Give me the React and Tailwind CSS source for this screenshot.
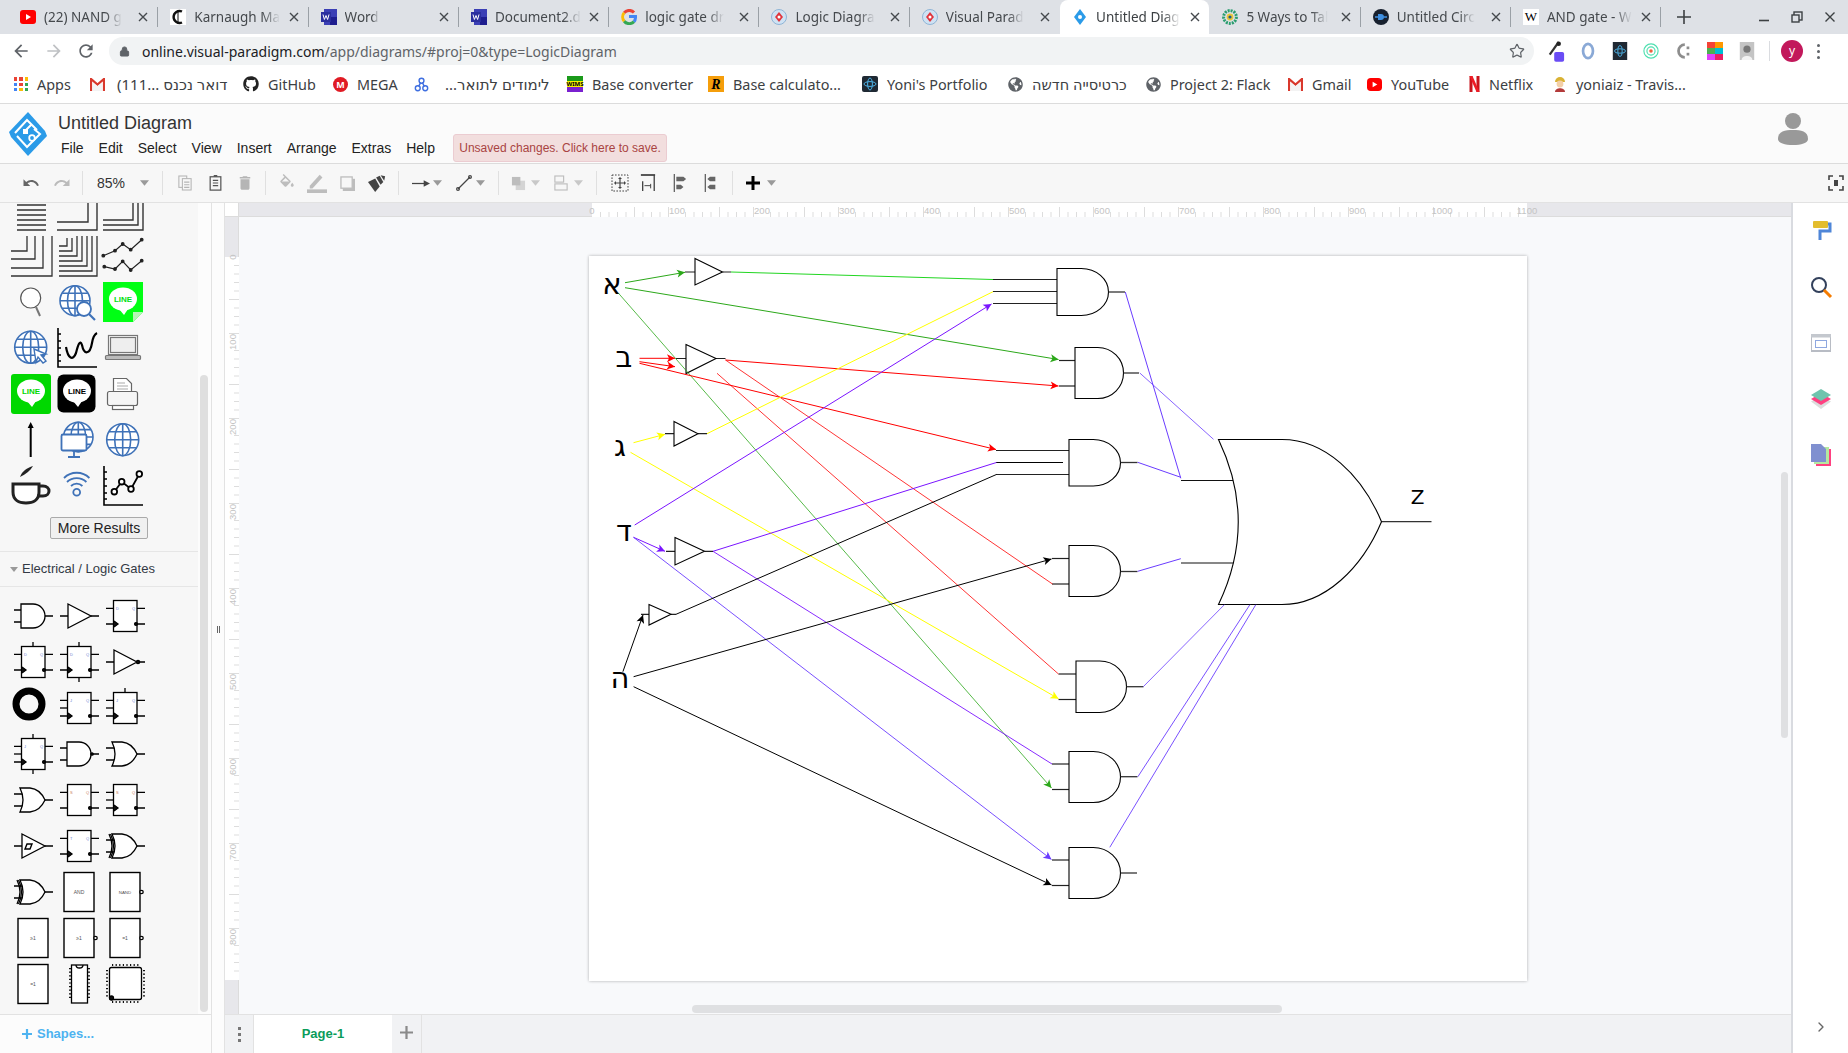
import React from 'react';
import { FaGithub, FaGlobeAmericas } from 'react-icons/fa';
import { Star, Lock, ChevronRight } from 'lucide-react';

// ---------- browser chrome ----------

const Fav = ({ kind }) => {
  if (kind === 'yt') return (
    <svg viewBox="0 0 16 16" className="w-4 h-4 shrink-0"><rect x="0" y="1" width="16" height="14" rx="3" fill="#f00" /><path d="M6 5l5 3-5 3z" fill="#fff" /></svg>
  );
  if (kind === 'kmap') return (
    <svg viewBox="0 0 16 16" className="w-4 h-4 shrink-0"><rect width="16" height="16" fill="#fff" /><path d="M12 2.5A6 6 0 1 0 12 13.5" fill="none" stroke="#111" strokeWidth="2.4" /><path d="M8 1v14" stroke="#111" strokeWidth="1" /></svg>
  );
  if (kind === 'word') return (
    <svg viewBox="0 0 16 16" className="w-4 h-4 shrink-0"><rect x="3" y="0" width="13" height="16" fill="#3b3fb5" /><rect x="9" y="8" width="7" height="8" fill="#1e1e8f" /><rect x="0" y="3" width="10" height="10" fill="#2b2f9e" /><path d="M2 5.5l1.4 5 1.6-4 1.6 4 1.4-5" fill="none" stroke="#fff" strokeWidth="1" /></svg>
  );
  if (kind === 'g') return (
    <svg viewBox="0 0 16 16" className="w-4 h-4 shrink-0" fill="none" strokeWidth="3">
      <path d="M13 3.5A6.5 6.5 0 0 0 3.2 3.8" stroke="#ea4335" />
      <path d="M3.2 3.8A6.5 6.5 0 0 0 3.2 12.2" stroke="#fbbc05" />
      <path d="M3.2 12.2A6.5 6.5 0 0 0 13 12.6" stroke="#34a853" />
      <path d="M13 12.6C14.4 11.2 14.6 9.6 14.5 7.5H8" stroke="#4285f4" />
    </svg>
  );
  if (kind === 'vp') return (
    <svg viewBox="0 0 16 16" className="w-4 h-4 shrink-0"><circle cx="8" cy="8" r="7.5" fill="#cfe2f3" stroke="#8fb4d6" /><path d="M8 3l4 5-4 5-4-5z" fill="#e0343c" /><circle cx="8" cy="8" r="1.5" fill="#fff" /></svg>
  );
  if (kind === 'vpblue') return (
    <svg viewBox="0 0 16 16" className="w-4 h-4 shrink-0"><path d="M8 0l6 8-6 8-6-8z" fill="#2b9be8" /><circle cx="8" cy="8" r="2" fill="#fff" /></svg>
  );
  if (kind === 'gear') return (
    <svg viewBox="0 0 16 16" className="w-4 h-4 shrink-0"><circle cx="8" cy="8" r="6.4" fill="none" stroke="#2a9d6f" strokeWidth="3" strokeDasharray="2 1" /><circle cx="8" cy="8" r="3.4" fill="#e8c53a" /><circle cx="8" cy="8" r="1.6" fill="#1b5f8a" /></svg>
  );
  if (kind === 'circ') return (
    <svg viewBox="0 0 16 16" className="w-4 h-4 shrink-0"><circle cx="8" cy="8" r="8" fill="#17202e" /><path d="M2 8h3M11 8h3" stroke="#3f8fe0" strokeWidth="1.4" /><path d="M5 5h3a3 3 0 0 1 0 6H5z" fill="#3f8fe0" /></svg>
  );
  return (
    <div className="w-4 h-4 shrink-0 bg-white flex items-center justify-center font-['Liberation_Serif',serif] text-[13px] text-black">W</div>
  );
};

const tabs = [
  { fav: 'yt', title: '(22) NAND g' },
  { fav: 'kmap', title: 'Karnaugh Ma' },
  { fav: 'word', title: 'Word' },
  { fav: 'word', title: 'Document2.d' },
  { fav: 'g', title: 'logic gate dr' },
  { fav: 'vp', title: 'Logic Diagra' },
  { fav: 'vp', title: 'Visual Parad' },
  { fav: 'vpblue', title: 'Untitled Diag', active: true },
  { fav: 'gear', title: '5 Ways to Tal' },
  { fav: 'circ', title: 'Untitled Circ' },
  { fav: 'wiki', title: 'AND gate - W' },
];

const TabClose = () => (
  <svg viewBox="0 0 10 10" className="w-[10px] h-[10px] shrink-0 ml-auto mr-[9px]"><path d="M1 1l8 8M9 1l-8 8" stroke="#45494d" strokeWidth="1.4" /></svg>
);

const TabStrip = () => (
  <div className="flex h-[34px] items-center bg-[#dee1e6] pl-[8px] text-[13.5px] text-[#45494d]">
    {tabs.map((t, i) => (
      <React.Fragment key={i}>
        <div className={t.active
          ? 'flex h-[34px] w-[149.3px] items-center rounded-t-lg bg-white pl-[12px] text-[#3c4043]'
          : 'flex h-[34px] w-[149.3px] items-center pl-[12px]'}>
          <Fav kind={t.fav} />
          <span className="ml-[8px] whitespace-nowrap [mask-image:linear-gradient(to_right,black_80%,transparent)]">{t.title}</span>
          <TabClose />
        </div>
        {!t.active && !(tabs[i + 1] && tabs[i + 1].active)
          ? <div className="h-[20px] w-px bg-[#9aa0a6]" />
          : <div className="h-[20px] w-px" />}
      </React.Fragment>
    ))}
    <svg viewBox="0 0 14 14" className="ml-[16px] w-[14px] h-[14px]"><path d="M7 0v14M0 7h14" stroke="#3c4043" strokeWidth="1.6" /></svg>
    <div className="ml-auto flex items-center">
      <svg viewBox="0 0 10 10" className="w-[10px] h-[10px]"><path d="M0 8.5h10" stroke="#3c4043" strokeWidth="1.6" /></svg>
      <svg viewBox="0 0 12 12" className="ml-[22px] w-[12px] h-[12px]" fill="none" stroke="#3c4043" strokeWidth="1.4"><rect x="3" y="1" width="8" height="8" /><rect x="1" y="4" width="7" height="7" fill="#dee1e6" /></svg>
      <svg viewBox="0 0 10 10" className="ml-[22px] mr-[13px] w-[10px] h-[10px]"><path d="M0.5 0.5l9 9M9.5 0.5l-9 9" stroke="#3c4043" strokeWidth="1.4" /></svg>
    </div>
  </div>
);

const NavIcon = ({ d, color, className }) => (
  <svg viewBox="0 0 24 24" className={className} fill={color}><path d={d} /></svg>
);

const AddressBar = () => (
  <div className="flex h-[34px] items-center bg-white">
    <NavIcon className="ml-[11px] w-5 h-5" color="#5f6368" d="M20 11H7.83l5.59-5.59L12 4l-8 8 8 8 1.41-1.41L7.83 13H20v-2z" />
    <NavIcon className="ml-[13px] w-5 h-5" color="#bfc1c4" d="M12 4l-1.41 1.41L16.17 11H4v2h12.17l-5.58 5.59L12 20l8-8z" />
    <NavIcon className="ml-[12px] w-5 h-5" color="#5f6368" d="M17.65 6.35C16.2 4.9 14.21 4 12 4c-4.42 0-7.99 3.58-7.99 8s3.57 8 7.99 8c3.73 0 6.84-2.55 7.73-6h-2.08c-.82 2.33-3.04 4-5.65 4-3.31 0-6-2.69-6-6s2.69-6 6-6c1.66 0 3.14.69 4.22 1.78L13 11h7V4l-2.35 2.35z" />
    <div className="ml-[13px] flex h-[28px] w-[1425px] items-center rounded-full bg-[#f1f3f4] pl-[10px] text-[14px]">
      <Lock className="w-[11px] h-[11px] text-[#5f6368]" fill="#5f6368" />
      <span className="ml-[12px] text-[#202124]">online.visual-paradigm.com</span>
      <span className="text-[#5f6368]">/app/diagrams/#proj=0&amp;type=LogicDiagram</span>
      <Star className="ml-auto mr-[9px] w-[16px] h-[16px] text-[#5f6368]" strokeWidth={1.8} />
    </div>
    <div className="ml-[13px] flex items-center">
      <svg viewBox="0 0 20 24" className="w-[18px] h-[22px]"><path d="M13 2L3 16" stroke="#333" strokeWidth="2.4" /><circle cx="13" cy="4" r="2.5" fill="#222" /><rect x="8" y="13" width="11" height="11" rx="2" fill="#6a4cf5" /></svg>
      <svg viewBox="0 0 16 20" className="ml-[15px] w-[16px] h-[18px]"><ellipse cx="8" cy="10" rx="5.5" ry="8" fill="none" stroke="#8aa9d6" strokeWidth="3" /></svg>
      <svg viewBox="0 0 16 20" className="ml-[16px] w-[16px] h-[18px]"><rect width="16" height="20" fill="#1f2933" /><ellipse cx="8" cy="10" rx="6" ry="2.4" fill="none" stroke="#4db3e8" /><ellipse cx="8" cy="10" rx="2.4" ry="6" fill="none" stroke="#4db3e8" /></svg>
      <svg viewBox="0 0 18 20" className="ml-[15px] w-[16px] h-[18px]" fill="none" stroke="#4fe0b0" strokeWidth="1.3"><circle cx="9" cy="10" r="8" /><circle cx="9" cy="10" r="4.6" /><circle cx="9" cy="10" r="2" fill="#f06040" stroke="none" /></svg>
      <svg viewBox="0 0 16 20" className="ml-[16px] w-[16px] h-[18px]"><path d="M10 3A7 7 0 1 0 10 17" fill="none" stroke="#8d8d8d" strokeWidth="3" /><rect x="12" y="5" width="3" height="3" fill="#8d8d8d" /><rect x="12" y="12" width="3" height="3" fill="#8d8d8d" /></svg>
      <div className="ml-[16px] grid h-[18px] w-[16px] grid-cols-2">
        <div className="bg-[#f44336]" /><div className="bg-[#ff9800]" />
        <div className="bg-[#4caf50]" /><div className="bg-[#00bcd4]" />
        <div className="bg-[#e040fb]" /><div className="bg-[#e91e63]" />
      </div>
      <svg viewBox="0 0 16 20" className="ml-[16px] w-[16px] h-[18px]"><rect width="16" height="20" fill="#c4c4c4" /><circle cx="8" cy="8" r="4" fill="#777" /><path d="M2 20c0-6 12-6 12 0z" fill="#f2f2f2" /></svg>
      <div className="ml-[14px] h-[20px] w-px bg-[#dadce0]" />
      <div className="ml-[11px] flex h-[22px] w-[22px] items-center justify-center rounded-full bg-[#c2185b] text-[12px] text-white">y</div>
      <div className="ml-[14px] flex flex-col gap-[3px]">
        <div className="h-[3px] w-[3px] rounded-full bg-[#5f6368]" />
        <div className="h-[3px] w-[3px] rounded-full bg-[#5f6368]" />
        <div className="h-[3px] w-[3px] rounded-full bg-[#5f6368]" />
      </div>
    </div>
  </div>
);

const GmailM = () => (
  <svg viewBox="0 0 16 14" className="w-[15px] h-[13px] shrink-0"><path d="M1 14V1l7 6 7-6v13" fill="none" stroke="#d9382c" strokeWidth="2.4" /><path d="M3 14V5l5 4 5-4v9z" fill="#f3f3f3" /></svg>
);
const YtMark = () => (
  <svg viewBox="0 0 16 16" className="w-[15px] h-[15px] shrink-0"><rect y="1" width="16" height="14" rx="4" fill="#f00" /><path d="M6 5l5 3-5 3z" fill="#fff" /></svg>
);
const GrayGlobe = () => <FaGlobeAmericas className="w-[15px] h-[15px] shrink-0 text-[#5f6368]" />;

const bookmarks = [
  { w: 'w-[76px]', text: 'Apps', icon: (
    <div className="grid h-[14px] w-[14px] shrink-0 grid-cols-3 gap-[2px]">
      <div className="bg-[#ea4335]" /><div className="bg-[#ea4335]" /><div className="bg-[#fbbc05]" />
      <div className="bg-[#4285f4]" /><div className="bg-[#ea4335]" /><div className="bg-[#34a853]" />
      <div className="bg-[#4285f4]" /><div className="bg-[#fbbc05]" /><div className="bg-[#34a853]" />
    </div>) },
  { w: 'w-[153px]', text: '(111... דואר נכנס', gap: 'ml-[3px] text-[15px]', icon: <GmailM /> },
  { w: 'w-[90px]', text: 'GitHub', icon: <FaGithub className="w-4 h-4 shrink-0 text-[#222]" /> },
  { w: 'w-[81px]', text: 'MEGA', icon: (
    <div className="flex h-[15px] w-[15px] shrink-0 items-center justify-center rounded-full bg-[#e01b24] text-[9px] font-bold text-white">M</div>) },
  { w: 'w-[153px]', text: 'לימודים לתואר...', rtl: true, gap: 'ml-[7px] text-[15px]', icon: (
    <svg viewBox="0 0 16 16" className="w-[15px] h-[15px] shrink-0" fill="none" stroke="#3f6fe0" strokeWidth="1.5"><circle cx="8" cy="4" r="2.6" /><circle cx="4" cy="12" r="2.6" /><circle cx="12" cy="12" r="2.6" /><path d="M7 6l-2 4M9 6l2 4" /></svg>) },
  { w: 'w-[141px]', text: 'Base converter', icon: (
    <div className="flex h-[16px] w-[16px] shrink-0 items-center justify-center bg-[linear-gradient(#1a9a1a_30%,#f4f000_30%,#f4f000_70%,#7a20d0_70%)] text-[6px] font-bold text-black">WIMS</div>) },
  { w: 'w-[154px]', text: 'Base calculato...', icon: (
    <div className="flex h-[16px] w-[16px] shrink-0 items-center justify-center bg-[#f59e0b] font-['Liberation_Serif',serif] text-[14px] font-bold italic text-black">R</div>) },
  { w: 'w-[146px]', text: "Yoni's Portfolio", icon: (
    <svg viewBox="0 0 16 16" className="w-4 h-4 shrink-0"><rect width="16" height="16" rx="2" fill="#1f2933" /><ellipse cx="8" cy="8" rx="6" ry="2.4" fill="none" stroke="#4db3e8" /><ellipse cx="8" cy="8" rx="2.4" ry="6" fill="none" stroke="#4db3e8" /></svg>) },
  { w: 'w-[138px]', text: 'כרטיסייה חדשה', rtl: true, gap: 'text-[14.5px]', icon: <GrayGlobe /> },
  { w: 'w-[142px]', text: 'Project 2: Flack', icon: <GrayGlobe /> },
  { w: 'w-[79px]', text: 'Gmail', icon: <GmailM /> },
  { w: 'w-[102px]', text: 'YouTube', icon: <YtMark /> },
  { w: 'w-[84px]', text: 'Netflix', icon: (
    <svg viewBox="0 0 10 16" className="w-[11px] h-[16px] shrink-0"><path d="M0 0h3v16H0zM7 0h3v16H7z" fill="#c8141c" /><path d="M0 0h3l7 16H7z" fill="#ee1c25" /></svg>) },
  { w: 'w-[150px]', text: 'yoniaiz - Travis...', icon: (
    <svg viewBox="0 0 14 16" className="w-[14px] h-[16px] shrink-0"><path d="M2 6a5 5 0 0 1 10 0z" fill="#d9b233" /><circle cx="7" cy="8" r="3.4" fill="#f3cfa8" /><path d="M2 16c0-5 10-5 10 0z" fill="#b33a3a" /></svg>) },
];

const Bookmarks = () => (
  <div className="flex h-[35px] items-center bg-white pb-[2px] pl-[14px] text-[14.4px] text-[#3c4043]">
    {bookmarks.map((b, i) => (
      <div key={i} className={`flex items-center gap-[9px] ${b.w}`}>
        {b.icon}
        <span dir={b.rtl ? 'rtl' : 'ltr'} className={`whitespace-nowrap ${b.gap || ''}`}>{b.text}</span>
      </div>
    ))}
  </div>
);

// ---------- app header and toolbar ----------

const Logo = () => (
  <svg viewBox="0 0 38 44" className="w-[38px] h-[44px]">
    <path d="M19 0L36 19 38 24 19 44 2 25 0 20z" fill="#2b9be8" />
    <path d="M6 21L18 8 28 18 M22 13L17 18" fill="none" stroke="#fff" strokeWidth="2" />
    <path d="M14 17h5v5h-5z" fill="#fff" />
    <path d="M8 24L18 35 31 22 25 17" fill="none" stroke="#fff" strokeWidth="2" />
    <circle cx="23" cy="26" r="2.8" fill="#2b9be8" stroke="#fff" strokeWidth="1.8" />
  </svg>
);

const menu = ['File', 'Edit', 'Select', 'View', 'Insert', 'Arrange', 'Extras', 'Help'];

const AppHeader = () => (
  <div className="flex h-[61px] border-y border-[#dcdcdc] bg-[#fbfbfb] font-['Liberation_Sans',sans-serif]">
    <div className="ml-[9px] self-center"><Logo /></div>
    <div className="ml-[11px] flex flex-col pt-[8px]">
      <div className="text-[18px] leading-[22px] text-[#333]">Untitled Diagram</div>
      <div className="flex h-[28px] items-center text-[14px] text-[#222]">
        {menu.map((m) => <span key={m} className="ml-[3px] mr-[12px] leading-none">{m}</span>)}
        <div className="ml-[6px] flex h-[28px] w-[214px] items-center justify-center rounded-[3px] border border-[#ebccd1] bg-[#f2dede] text-[12px] text-[#a94442]">Unsaved changes. Click here to save.</div>
      </div>
    </div>
    <svg viewBox="0 0 30 32" className="ml-auto mr-[40px] mt-[9px] w-[30px] h-[32px]" fill="#999">
      <circle cx="15" cy="8" r="8" />
      <path d="M0 26c0-8 7-9 15-9s15 1 15 9c0 4-7 6-15 6S0 30 0 26z" />
    </svg>
  </div>
);

const Tb = ({ className, children }) => (
  <div className={`flex h-[30px] items-center justify-center ${className}`}>{children}</div>
);
const TbSep = ({ className }) => <div className={`h-[24px] w-px bg-[#e0e0e0] ${className}`} />;
const Caret = ({ className }) => (
  <svg viewBox="0 0 10 6" className={`w-[9px] h-[6px] ${className}`}><path d="M0 0h10L5 6z" fill="#9a9a9a" /></svg>
);
const TI = ({ d, color }) => (
  <svg viewBox="0 0 24 24" className="w-[18px] h-[18px]" fill={color}><path d={d} /></svg>
);

const Toolbar = () => (
  <div className="flex h-[39px] items-center border-b border-[#e2e2e2] bg-[#f7f7f7] pl-[16px] font-['Liberation_Sans',sans-serif]">
    <Tb className="w-[30px]"><TI color="#666" d="M12.5 8c-2.65 0-5.05.99-6.9 2.6L2 7v9h9l-3.62-3.62c1.39-1.16 3.16-1.88 5.12-1.88 3.54 0 6.55 2.31 7.6 5.5l2.37-.78C21.08 11.03 17.15 8 12.5 8z" /></Tb>
    <Tb className="ml-[1px] w-[30px]"><TI color="#bbb" d="M18.4 10.6C16.55 8.99 14.15 8 11.5 8c-4.65 0-8.58 3.03-9.96 7.22L3.9 16c1.05-3.19 4.05-5.5 7.6-5.5 1.95 0 3.73.72 5.12 1.88L13 16h9V7l-3.6 3.6z" /></Tb>
    <TbSep className="ml-[5px]" />
    <div className="ml-[14px] w-[43px] text-[14px] text-[#333]">85%</div>
    <Caret className="" />
    <TbSep className="ml-[13px]" />
    <Tb className="ml-[7px] w-[30px]">
      <svg viewBox="0 0 16 18" className="w-[14px] h-[16px]" fill="none" stroke="#b5b5b5" strokeWidth="1.2"><rect x="1" y="1" width="9" height="13" /><rect x="5" y="4" width="10" height="13" fill="#f7f7f7" /><path d="M7 8h6M7 11h6M7 14h6" /></svg>
    </Tb>
    <Tb className="w-[30px]">
      <svg viewBox="0 0 14 18" className="w-[13px] h-[16px]" fill="none" stroke="#555" strokeWidth="1.4"><rect x="1" y="2" width="12" height="15" /><path d="M4 6h6M4 9h6M4 12h6" /><path d="M5 1h4" strokeWidth="2" /></svg>
    </Tb>
    <Tb className="w-[30px]"><TI color="#b5b5b5" d="M6 19c0 1.1.9 2 2 2h8c1.1 0 2-.9 2-2V7H6v12zM19 4h-3.5l-1-1h-5l-1 1H5v2h14V4z" /></Tb>
    <TbSep className="ml-[5px]" />
    <Tb className="ml-[6px] w-[30px]"><TI color="#bdbdbd" d="M16.56 8.94L7.62 0 6.21 1.41l2.38 2.38-5.15 5.15c-.59.59-.59 1.54 0 2.12l5.5 5.5c.29.29.68.44 1.06.44s.77-.15 1.06-.44l5.5-5.5c.59-.58.59-1.53 0-2.12zM5.21 10L10 5.21 14.79 10H5.21zM19 11.5s-2 2.17-2 3.5c0 1.1.9 2 2 2s2-.9 2-2c0-1.33-2-3.5-2-3.5z" /></Tb>
    <Tb className="w-[30px]">
      <svg viewBox="0 0 22 22" className="w-[20px] h-[20px]" fill="#bdbdbd"><path d="M3 14L14 2l3 3L6 17H3z" /><rect x="0" y="18" width="22" height="4" /></svg>
    </Tb>
    <Tb className="w-[30px]">
      <svg viewBox="0 0 16 16" className="w-[15px] h-[15px]"><rect x="3" y="3" width="13" height="13" fill="#bdbdbd" /><rect x="1" y="1" width="12" height="12" fill="#f7f7f7" stroke="#bdbdbd" strokeWidth="1.4" /></svg>
    </Tb>
    <Tb className="w-[30px]">
      <svg viewBox="0 0 20 20" className="w-[18px] h-[18px]" fill="#444"><path d="M0 9l8-4 5 9-5 6z" /><path d="M9 4l4-2 4 7-3 3z" /><path d="M14 1.5l5 1-1 5z" /></svg>
    </Tb>
    <TbSep className="ml-[6px]" />
    <Tb className="ml-[10px] w-[24px]">
      <svg viewBox="0 0 20 10" className="w-[18px] h-[9px]"><path d="M0 5h14" stroke="#444" strokeWidth="1.4" /><path d="M13 1.5L20 5l-7 3.5z" fill="#444" /></svg>
    </Tb>
    <Caret className="" />
    <Tb className="ml-[10px] w-[24px]">
      <svg viewBox="0 0 16 16" className="w-[16px] h-[16px]" fill="none" stroke="#444" strokeWidth="1.2"><path d="M2 14L14 2" /><circle cx="2" cy="14" r="1.4" /><circle cx="14" cy="2" r="1.4" /></svg>
    </Tb>
    <Caret className="" />
    <TbSep className="ml-[13px]" />
    <Tb className="ml-[7px] w-[24px]">
      <svg viewBox="0 0 16 16" className="w-[15px] h-[15px]"><rect x="5" y="5" width="10" height="10" fill="#d4d4d4" /><rect x="1" y="1" width="9" height="9" fill="#bdbdbd" /></svg>
    </Tb>
    <Caret className="ml-[1px] opacity-50" />
    <Tb className="ml-[9px] w-[24px]">
      <svg viewBox="0 0 16 18" className="w-[14px] h-[16px]" fill="none" stroke="#bdbdbd" strokeWidth="1.3"><rect x="1" y="1" width="10" height="7" /><rect x="1" y="10" width="14" height="7" /></svg>
    </Tb>
    <Caret className="ml-[1px] opacity-50" />
    <TbSep className="ml-[13px]" />
    <Tb className="ml-[9px] w-[28px]">
      <svg viewBox="0 0 18 18" className="w-[18px] h-[18px]" fill="none" stroke="#444"><rect x="1" y="1" width="16" height="16" strokeDasharray="1.6 1.4" /><path d="M9 4v10M4 9h10" strokeWidth="1.2" /><path d="M9 3l-2 2h4zM9 15l-2-2h4zM3 9l2-2v4zM15 9l-2-2v4z" fill="#444" stroke="none" /></svg>
    </Tb>
    <Tb className="w-[28px]">
      <svg viewBox="0 0 18 20" className="w-[16px] h-[18px]" fill="none" stroke="#444" strokeWidth="1.5"><path d="M1 1h16" strokeWidth="2" /><path d="M16 1v18M3 8v11" /><path d="M5 13h7M12 11v5" strokeWidth="1.1" /></svg>
    </Tb>
    <Tb className="ml-[3px] w-[28px]">
      <svg viewBox="0 0 18 20" className="w-[16px] h-[18px]" fill="#666"><path d="M3 0h1.5v20H3z" /><path d="M6 3h8l3 2.5L14 8H6zM6 12h5l3 2.5L11 17H6z" /></svg>
    </Tb>
    <Tb className="ml-[3px] w-[28px]">
      <svg viewBox="0 0 18 20" className="w-[16px] h-[18px]" fill="#666"><path d="M3 0h1.5v20H3z" /><path d="M15 3H9L6 5.5 9 8h6zM15 12H9l-3 2.5L9 17h6z" /></svg>
    </Tb>
    <TbSep className="ml-[8px]" />
    <Tb className="ml-[8px] w-[24px]">
      <svg viewBox="0 0 14 14" className="w-[14px] h-[14px]"><path d="M7 0v14M0 7h14" stroke="#000" strokeWidth="3" /></svg>
    </Tb>
    <Caret className="ml-[2px]" />
    <svg viewBox="0 0 16 16" className="ml-auto mr-[4px] w-[16px] h-[16px]" fill="none" stroke="#444" strokeWidth="1.6">
      <path d="M1 5V1h4M11 1h4v4M15 11v4h-4M5 15H1v-4" />
      <rect x="6" y="5" width="4" height="6" fill="#444" stroke="none" />
    </svg>
  </div>
);

// ---------- shape sidebar ----------

const Cell = ({ children, ...rest }) => (
  <svg viewBox="0 0 46 46" className="w-[46px] h-[46px]" fill="none" {...rest}>{children}</svg>
);

const BLUE = '#3f72b8';
const Globe = ({ cx, cy, r }) => (
  <g stroke={BLUE} strokeWidth="1.6" fill="#fff">
    <circle cx={cx} cy={cy} r={r} />
    <ellipse cx={cx} cy={cy} rx={r * 0.5} ry={r} fill="none" />
    <path d={`M${cx} ${cy - r}V${cy + r}M${cx - r} ${cy}H${cx + r}M${cx - r * 0.85} ${cy - r * 0.5}H${cx + r * 0.85}M${cx - r * 0.85} ${cy + r * 0.5}H${cx + r * 0.85}`} fill="none" />
  </g>
);
const LineBubble = ({ color }) => (
  <g>
    <ellipse cx="23" cy="20" rx="14" ry="11.5" fill="#fff" />
    <path d="M19 30l5 6 4-6z" fill="#fff" />
    <text x="23" y="23" textAnchor="middle" fontSize="8" fontWeight="700" fill={color} fontFamily="Liberation Sans, sans-serif">LINE</text>
  </g>
);

const shapeIcons = [
  <Cell key="a1" stroke="#333" strokeWidth="1.4"><path d="M9 3h29M9 8h29M9 13h29M9 18h29M9 23h29M9 28h29M9 33h29M9 38h29M9 43h29" /></Cell>,
  <Cell key="a2" stroke="#333" strokeWidth="1.4"><path d="M3 35h31V3M3 43h40V3" /></Cell>,
  <Cell key="a3" stroke="#333" strokeWidth="1.4"><path d="M3 43h40V3M3 38h35V3M3 33h30V3" /></Cell>,
  <Cell key="b1" stroke="#333" strokeWidth="1.3"><path d="M3 43h41V3M3 35h32V3M3 26h24V3M3 18h16V3" /></Cell>,
  <Cell key="b2" stroke="#333" strokeWidth="1.3"><path d="M5 43h38V3M5 38h33V3M5 33h28V3M5 28h23V3M5 23h18V3M5 18h13V5M5 13h8V5" /></Cell>,
  <Cell key="b3" stroke="#222" strokeWidth="1.2">
    <path d="M3.3 22.7L15 17.7 22.7 11 30.7 16.7 41.7 6.7M4.3 33.7L15 36 22.7 28.3 30.7 37 41.7 27.7" />
    <g fill="#222">
      <circle cx="3.3" cy="22.7" r="1.3" /><circle cx="15" cy="17.7" r="1.3" /><circle cx="22.7" cy="11" r="1.3" /><circle cx="30.7" cy="16.7" r="1.3" /><circle cx="41.7" cy="6.7" r="1.3" />
      <circle cx="4.3" cy="33.7" r="1.3" /><circle cx="15" cy="36" r="1.3" /><circle cx="22.7" cy="28.3" r="1.3" /><circle cx="30.7" cy="37" r="1.3" /><circle cx="41.7" cy="27.7" r="1.3" />
    </g>
  </Cell>,
  <Cell key="c1"><circle cx="22.7" cy="19" r="10" stroke="#555" strokeWidth="1.2" fill="#fff" /><path d="M28 28l4 9" stroke="#777" strokeWidth="2" /></Cell>,
  <Cell key="c2"><Globe cx={21} cy={21.7} r={15} /><circle cx="30" cy="30" r="7" stroke={BLUE} strokeWidth="1.8" fill="#fff" /><path d="M35 35l6 6" stroke={BLUE} strokeWidth="2.2" /></Cell>,
  <Cell key="c3"><path d="M3 3h40v30L33 43H3z" fill="#00ff14" /><path d="M43 33H33v10z" fill="#b5f5b5" /><LineBubble color="#00e012" /></Cell>,
  <Cell key="d1"><Globe cx={22.7} cy={22.3} r={16} /><path d="M26 24l12 5-5 1 5 6-3 2-5-6-2 5z" fill="#fff" stroke={BLUE} strokeWidth="1.4" /></Cell>,
  <Cell key="d2">
    <path d="M4 3v39h39M4 9h3M4 16h3M4 23h3M4 30h3M4 36h3" stroke="#000" strokeWidth="1.6" />
    <path d="M12 22C14 34 19 36 22 28 24 20 26 14 28 20 30 30 36 30 38 18 39 12 41 9 43 8" stroke="#000" strokeWidth="2.2" />
  </Cell>,
  <Cell key="d3" stroke="#777" strokeWidth="1.2">
    <rect x="8.5" y="10.5" width="29" height="19" fill="#fff" />
    <rect x="10.5" y="12.5" width="25" height="15" fill="#eee" />
    <rect x="5.5" y="30.5" width="35" height="4" rx="1" fill="#bbb" />
  </Cell>,
  <Cell key="e1"><rect x="3" y="3" width="40" height="40" rx="3" fill="#00d800" /><LineBubble color="#00d800" /></Cell>,
  <Cell key="e2"><rect x="3.5" y="3.5" width="38" height="38" rx="6" fill="#000" /><LineBubble color="#000" /></Cell>,
  <Cell key="e3" stroke="#666" strokeWidth="1.2">
    <path d="M13.5 21V7.5h13l5 5V21" fill="#fff" />
    <path d="M17 12h8M17 15h11M17 18h11" stroke="#aaa" />
    <rect x="7.5" y="20.5" width="30" height="14" rx="2" fill="#f5f5f5" />
    <rect x="12.5" y="34.5" width="21" height="4" fill="#fff" />
  </Cell>,
  <Cell key="f1"><path d="M22.7 10v30" stroke="#000" strokeWidth="2" /><path d="M22.7 5l-3 6h6z" fill="#000" /></Cell>,
  <Cell key="f2">
    <Globe cx={24.3} cy={20} r={14.7} />
    <rect x="7.5" y="17.5" width="25" height="16" rx="1.5" fill="#fff" stroke={BLUE} strokeWidth="1.8" />
    <path d="M20 34v5M14 40h12" stroke={BLUE} strokeWidth="1.8" />
  </Cell>,
  <Cell key="f3"><Globe cx={22.7} cy={22.7} r={16} /></Cell>,
  <Cell key="g1">
    <path d="M12 14C14 8 19 5 25 3 22 8 18 11 12 14z" fill="#222" />
    <path d="M5 21H31V29C31 37 25 40 18 40S5 37 5 29z" fill="#fff" stroke="#222" strokeWidth="3" />
    <path d="M31 23H35C43 23 43 33 35 33H29" stroke="#222" strokeWidth="3" />
  </Cell>,
  <Cell key="g2" stroke={BLUE} strokeWidth="1.8"><circle cx="22.7" cy="29.3" r="3.4" /><path d="M17 23a8 8 0 0 1 11.4 0M13 19a14 14 0 0 1 19.4 0M10 15a18 18 0 0 1 25.4 0" /></Cell>,
  <Cell key="g3">
    <path d="M4 3v39h39M4 9h3M4 16h3M4 23h3M4 30h3M4 36h3" stroke="#000" strokeWidth="1.6" />
    <path d="M14.3 28.7L21.7 18.7 31 26 39.3 11" stroke="#000" strokeWidth="1.8" />
    <g fill="#fff" stroke="#000" strokeWidth="1.8"><circle cx="14.3" cy="28.7" r="2.8" /><circle cx="21.7" cy="18.7" r="2.8" /><circle cx="31" cy="26" r="2.8" /><circle cx="39.3" cy="11" r="2.8" /></g>
  </Cell>,
];

const G = ({ children }) => (
  <svg viewBox="0 0 46 46" className="w-[46px] h-[46px]" fill="none" stroke="#000" strokeWidth="1.3">{children}</svg>
);
const AndBody = () => <path d="M11 11H23A12 12 0 0 1 23 35H11Z" fill="#fff" />;
const AndGate = ({ dot }) => (
  <G>
    <path d="M4 17H11M4 29H11M35 23H43" />
    <AndBody />
    {dot && <circle cx="36" cy="23" r="1.2" fill="#111" />}
  </G>
);
const BufGate = ({ dot }) => (
  <G>
    <path d="M4 23H12M35 23H43" />
    <path d="M12 11L35 23 12 35Z" fill="#fff" />
    {dot && <circle cx="36" cy="23" r="1.6" fill="#111" />}
  </G>
);
const OrGate = ({ xor, bar }) => (
  <G>
    <path d="M4 17H13M4 29H13M35 23H43" />
    {xor && <path d="M7 11Q13 23 7 35" />}
    <path d="M10 11H20Q30 12 35 23 30 34 20 35H10Q16 23 10 11Z" fill="#fff" />
    {bar && <path d="M8.5 11Q14.5 23 8.5 35" />}
  </G>
);
const FF = ({ top, bottom, three, clock, l = 'D', tr = 'Q', col = '#6a7fd0' }) => (
  <G>
    <path d="M4 15.3H12M4 31H12M35 15.3H43M35 31H43" />
    {three && <path d="M4 23H12" />}
    {top && <path d="M23 3V8" />}
    {bottom && <path d="M23 38V43" />}
    <rect x="11.5" y="7.5" width="23.5" height="31" fill="#fff" />
    {clock && <path d="M12 28L16 31 12 34" fill="#111" />}
    <circle cx="34" cy="31" r="1.4" fill="#111" />
    <text x="14" y="17" fontSize="4" stroke="none" fill={col} fontFamily="Liberation Sans, sans-serif">{l}</text>
    <text x="30" y="17" fontSize="4" stroke="none" fill={col} fontFamily="Liberation Sans, sans-serif">{tr}</text>
  </G>
);
const LogicBox = ({ label, bubble, small }) => (
  <G>
    <rect x="8" y="3.5" width="30" height="39" fill="#fff" strokeWidth="1.4" />
    {bubble && <circle cx="39.5" cy="23" r="1.7" fill="#fff" />}
    <text x="23" y="24.5" textAnchor="middle" fontSize={small ? 4.4 : 5} stroke="none" fill="#555" fontFamily="Liberation Sans, sans-serif">{label}</text>
  </G>
);

const gateIcons = [
  <AndGate key="1" />, <BufGate key="2" />, <FF key="3" clock />,
  <FF key="4" top clock />, <FF key="5" top bottom clock />, <BufGate key="6" dot />,
  <G key="7"><circle cx="19" cy="19" r="13" stroke="#000" strokeWidth="7" /></G>, <FF key="8" three clock l="J" />, <FF key="9" top three clock l="J" />,
  <FF key="10" top bottom three clock l="J" />, <AndGate key="11" dot />, <OrGate key="12" />,
  <OrGate key="13" />, <FF key="14" l="S" col="#c97a5a" />, <FF key="15" three clock l="S" col="#c97a5a" />,
  <G key="16"><path d="M4 23H12M35 23H43" /><path d="M12 11L35 23 12 35Z" fill="#fff" /><path d="M15 26L17 21H22L20 26Z" strokeWidth="1.4" /></G>, <FF key="17" clock l="T" />, <OrGate key="18" xor bar />,
  <OrGate key="19" xor bar />, <LogicBox key="20" label="AND" />, <LogicBox key="21" label="NAND" bubble small />,
  <LogicBox key="22" label="≥1" />, <LogicBox key="23" label="≥1" bubble />, <LogicBox key="24" label="=1" bubble />,
  <LogicBox key="25" label="=1" />,
  <G key="26">
    <rect x="15.5" y="4" width="16" height="38" fill="#fff" strokeWidth="1.3" />
    <path d="M14 7v32M33 7v32" stroke="#111" strokeWidth="2" strokeDasharray="1.2 2.4" />
    <path d="M20 4a3.5 3 0 0 0 7 0" />
  </G>,
  <G key="27">
    <rect x="7.5" y="6.5" width="32" height="32" rx="2" fill="#fff" strokeWidth="1.3" />
    <path d="M5 9v27M42 9v27M10 4h27M10 41h27" stroke="#111" strokeWidth="2" strokeDasharray="1.2 2.4" />
    <circle cx="9.5" cy="37" r="2" fill="#111" />
  </G>,
];

const Sidebar = () => (
  <div className="flex w-[212px] shrink-0 flex-col border-r border-[#e2e2e2] bg-[#fcfcfc] font-['Liberation_Sans',sans-serif]">
    <div className="flex min-h-0 flex-1">
      <div className="w-[199px] overflow-hidden bg-[#f7f7f7]">
        <div className="-mt-[16px] grid grid-cols-[46px_46px_46px] auto-rows-[46px] pl-[8px]">{shapeIcons}</div>
        <button className="ml-[50px] mt-[8px] flex h-[22px] w-[98px] items-center justify-center rounded-[2px] border border-[#aaa] bg-[#f0f0f0] text-[14px] text-[#222]">More Results</button>
        <div className="mt-[12px] flex h-[36px] items-center border-y border-[#e6e6e6] pl-[10px] text-[13px] text-[#333a45]">
          <svg viewBox="0 0 8 5" className="w-[8px] h-[5px]"><path d="M0 0h8L4 5z" fill="#9a9a9a" /></svg>
          <span className="ml-[4px]">Electrical / Logic Gates</span>
        </div>
        <div className="mt-[6px] grid grid-cols-[46px_46px_46px] auto-rows-[46px] pl-[10px]">{gateIcons}</div>
      </div>
      <div className="flex w-[13px] flex-col pl-[2px]">
        <div className="mt-[172px] mb-[2px] w-[8px] flex-1 rounded-full bg-[#dfdfdf]" />
      </div>
    </div>
    <div className="flex h-[39px] items-center border-t border-[#e2e2e2] pl-[22px] text-[13px] font-bold text-[#4eb3f0]">
      <svg viewBox="0 0 10 10" className="w-[10px] h-[10px]"><path d="M5 0v10M0 5h10" stroke="#4eb3f0" strokeWidth="2.2" /></svg>
      <span className="ml-[5px]">Shapes...</span>
    </div>
  </div>
);

// ---------- diagram ----------

const PURPLE = '#6a3cff';
const VIOLET = '#7a14ff';
const RED = '#ff0000';
const YELLOW = '#ffff00';
const GREEN = '#2ca81a';

const Wire = ({ p, c, w = 1 }) => (
  <polyline points={p} fill="none" stroke={c} strokeWidth={w} />
);

const Arrow = ({ x1, y1, x2, y2, c, w = 1 }) => {
  const a = Math.atan2(y2 - y1, x2 - x1);
  const pt = (back, side) => {
    const bx = x2 - Math.cos(a) * back - Math.sin(a) * side;
    const by = y2 - Math.sin(a) * back + Math.cos(a) * side;
    return `${bx},${by}`;
  };
  return (
    <g>
      <line x1={x1} y1={y1} x2={x2} y2={y2} stroke={c} strokeWidth={w} />
      <polygon points={`${x2},${y2} ${pt(8, 4)} ${pt(6, 0)} ${pt(8, -4)}`} fill={c} />
    </g>
  );
};

const And = ({ x, t, b, tip, inputs, outY, outX }) => {
  const s = x + (tip - x) * 0.47;
  return (
    <g stroke="#000" fill="none" strokeWidth="1.1">
      {inputs.map((i, n) => <path key={n} d={`M${i[0]} ${i[1]}H${x}`} stroke="#222" strokeWidth="1.2" />)}
      <path d={`M${x} ${t}H${s}A${tip - s} ${(b - t) / 2} 0 0 1 ${s} ${b}H${x}Z`} fill="#fff" />
      <path d={`M${tip} ${outY}H${outX}`} stroke="#333" strokeWidth="1.3" />
    </g>
  );
};

const Buf = ({ x, t, b, tip, y, inX, outX }) => (
  <g stroke="#000" fill="none" strokeWidth="1.1">
    <path d={`M${inX} ${y}H${x}M${tip} ${y}H${outX}`} stroke="#222" strokeWidth="1.2" />
    <path d={`M${x} ${t}L${tip} ${y}L${x} ${b}Z`} fill="#fff" />
  </g>
);

const hebrew = 'DejaVu Sans, sans-serif';

const Diagram = () => (
  <svg viewBox="589 256 938 725" className="h-[725px] w-[938px]">
    <Buf x={695} t={258.5} b={285} tip={722.5} y={272} inX={685} outX={731} />
    <Buf x={686} t={344.5} b={373.5} tip={716} y={358.5} inX={676} outX={725.5} />
    <Buf x={674} t={421.5} b={446} tip={698} y={433.7} inX={665} outX={707} />
    <Buf x={675} t={537.5} b={565} tip={704.5} y={551.3} inX={666} outX={713} />
    <Buf x={649} t={604.5} b={625} tip={671} y={614.3} inX={641} outX={676} />

    <And x={1057} t={268.5} b={315.5} tip={1108.5} outY={292} outX={1125} inputs={[[993, 279.5], [993, 291.5], [993, 303.5]]} />
    <And x={1075} t={347.5} b={398.5} tip={1123.5} outY={373} outX={1139} inputs={[[1059, 360.5], [1059, 386]]} />
    <And x={1069} t={439.5} b={486} tip={1120.5} outY={462.5} outX={1137.5} inputs={[[996, 450.5], [996, 474.5]]} />
    <path d="M996 462.5H1063" stroke="#000" strokeWidth="1" />
    <And x={1069} t={545.5} b={596.5} tip={1120.5} outY={571.5} outX={1137.5} inputs={[[1052, 558.5], [1052, 584]]} />
    <And x={1076} t={661} b={712.5} tip={1126.5} outY={686.7} outX={1143.5} inputs={[[1058.5, 674], [1058.5, 699.5]]} />
    <And x={1069} t={751.5} b={802.5} tip={1120.5} outY={776.7} outX={1137.5} inputs={[[1052, 764], [1052, 789.5]]} />
    <And x={1069} t={847.5} b={898.5} tip={1120.5} outY={873} outX={1137} inputs={[[1052, 860], [1052, 885.5]]} />

    {/* big OR gate */}
    <path d="M1181 480.5H1234M1181 563H1234" stroke="#111" strokeWidth="1.1" />
    <path d="M1381.5 521.7H1431.5" stroke="#333" strokeWidth="1.3" />
    <path d="M1218.5 439.5H1282C1325 439.5 1362 475 1381.5 521.7 1362 568 1325 604.5 1282 604.5H1218.5Q1258 522 1218.5 439.5Z" fill="#fff" stroke="#000" strokeWidth="1.1" />

    {/* input wires */}
    <Arrow x1={625} y1={282.7} x2={685} y2={272.3} c={GREEN} />
    <Arrow x1={625} y1={287.7} x2={1058.5} y2={359.5} c={GREEN} />
    <Arrow x1={618} y1={292.7} x2={1051.5} y2={788} c={GREEN} w={0.8} />
    <Wire p="731,272 993,279.5" c="#22d622" />

    <Arrow x1={639.5} y1={358.3} x2={675} y2={358.3} c={RED} />
    <Arrow x1={639.5} y1={361.7} x2={675} y2={366.7} c={RED} />
    <Arrow x1={639.5} y1={363.3} x2={996} y2={449.5} c={RED} />
    <Arrow x1={725.5} y1={360} x2={1058.5} y2={386} c={RED} />
    <Wire p="725.5,360 1052.5,584" c={RED} w={0.8} />
    <Wire p="717,373.3 1058.5,674" c={RED} w={0.8} />

    <Arrow x1={633.5} y1={442.7} x2={665} y2={434.3} c={YELLOW} />
    <Wire p="707,433.7 993,291.7" c={YELLOW} />
    <Arrow x1={630.5} y1={452.3} x2={1058.5} y2={698.7} c={YELLOW} />

    <Arrow x1={634.7} y1={525} x2={991.5} y2={304} c={VIOLET} />
    <Arrow x1={633.5} y1={537.3} x2={665} y2={551.3} c={VIOLET} />
    <Arrow x1={633.5} y1={537.3} x2={1051.5} y2={859.5} c={PURPLE} w={0.9} />
    <Wire p="713,551.3 996.4,462.5" c={VIOLET} />
    <Wire p="713,551.3 1052,764" c={VIOLET} w={0.9} />

    <Wire p="676,614.3 996.4,474.5" c="#000" />
    <Arrow x1={622.9} y1={671.7} x2={643} y2={615} c="#000" />
    <Arrow x1={633.6} y1={676.7} x2={1051.5} y2={559} c="#000" />
    <Arrow x1={633.6} y1={686.7} x2={1051.5} y2={885} c="#000" />

    {/* outputs into the OR */}
    <Wire p="1125.3,292 1180.8,478.3" c={PURPLE} />
    <Wire p="1139.8,373 1213.5,439.3" c={PURPLE} w={0.8} />
    <Wire p="1137.7,462.3 1180.8,477.3" c={PURPLE} />
    <Wire p="1137.7,571.3 1180.8,558.7" c={PURPLE} />
    <Wire p="1143.3,686.7 1224.4,604.7" c={PURPLE} w={0.8} />
    <Wire p="1137.9,776.7 1249.9,604.7" c={PURPLE} w={0.9} />
    <Wire p="1109.8,847.3 1255.8,604.7" c={PURPLE} w={0.9} />

    <g fontFamily={hebrew} fontSize="29" fill="#000" textAnchor="middle">
      <text x="612" y="294">א</text>
      <text x="624" y="367">ב</text>
      <text x="620" y="456">ג</text>
      <text x="624" y="541">ד</text>
      <text x="620" y="688">ה</text>
    </g>
    <text x="1417.5" y="504" fontFamily={hebrew} fontSize="20" fill="#000" textAnchor="middle">Z</text>
  </svg>
);

// ---------- rulers ----------

const rulerTicks = Array.from({ length: 110 }, (_, i) => i);
const rulerLabels = Array.from({ length: 12 }, (_, i) => i);
const sideLabels = Array.from({ length: 9 }, (_, i) => i);
const sideTicks = Array.from({ length: 85 }, (_, i) => i);

const TopRuler = () => (
  <svg viewBox="0 0 935 14" className="h-[14px] w-[935px] overflow-visible bg-white">
    {rulerTicks.map((i) => (
      i % 10 === 0 ? null : (
        <line key={i} x1={i * 8.5} x2={i * 8.5} y1={i % 10 === 5 || i % 10 === 9 ? 4 : 9} y2={14} stroke="#d4d4d4" strokeWidth="0.8" />
      )
    ))}
    {rulerLabels.map((i) => (
      <text key={i} x={i * 85} y={11} fontSize="9.5" fill="#c4c4c4" textAnchor="middle" fontFamily="Liberation Sans, sans-serif">{i * 100}</text>
    ))}
  </svg>
);

const SideRuler = () => (
  <svg viewBox="0 0 14 723" className="mt-[40px] h-[723px] w-[14px] overflow-visible bg-white">
    {sideTicks.map((i) => (
      i % 10 === 0 ? null : (
        <line key={i} y1={i * 8.5} y2={i * 8.5} x1={i % 10 === 5 || i % 10 === 9 ? 4 : 9} x2={14} stroke="#d4d4d4" strokeWidth="0.8" />
      )
    ))}
    {sideLabels.map((i) => (
      <text key={i} transform={`translate(11 ${i * 85}) rotate(-90)`} fontSize="9.5" fill="#c4c4c4" textAnchor="middle" fontFamily="Liberation Sans, sans-serif">{i * 100}</text>
    ))}
  </svg>
);

// ---------- right rail ----------

const RailIcon = ({ children }) => (
  <div className="flex h-[56px] items-center justify-center">
    <svg viewBox="0 0 24 24" className="w-[24px] h-[24px]">{children}</svg>
  </div>
);

const RightRail = () => (
  <div className="flex w-[57px] shrink-0 flex-col border-l-2 border-[#d9dbe0] bg-white pb-[18px]">
    <RailIcon>
      <rect x="4" y="2" width="15" height="7" rx="1" fill="#e3bd2e" />
      <path d="M19 5h2v7H11v9" fill="none" stroke="#4f86d8" strokeWidth="3" />
    </RailIcon>
    <RailIcon>
      <circle cx="10" cy="10" r="7" fill="none" stroke="#33415c" strokeWidth="2" />
      <path d="M15 15l7 7" stroke="#f57c00" strokeWidth="3" />
    </RailIcon>
    <RailIcon>
      <rect x="2.5" y="3.5" width="19" height="17" fill="#fff" stroke="#b8bcc4" />
      <rect x="2" y="3" width="20" height="3.5" fill="#c4c8ce" />
      <rect x="2" y="19" width="20" height="2" fill="#b8bcc4" />
      <rect x="6.5" y="9.5" width="11" height="7" fill="none" stroke="#8fa8e0" />
    </RailIcon>
    <RailIcon>
      <path d="M12 9l10 5.5L12 22 2 14.5z" fill="#dcdcdc" />
      <path d="M12 6l10 6-10 6-10-6z" fill="#ff4081" />
      <path d="M12 2l10 6-10 6L2 8z" fill="#6fc4ad" />
    </RailIcon>
    <RailIcon>
      <rect x="7" y="6" width="15" height="17" fill="#ff4081" />
      <rect x="5" y="4" width="15" height="17" fill="#b5e8a0" />
      <path d="M2 1h10l5 5v13H2z" fill="#8090d0" />
    </RailIcon>
    <div className="mt-auto flex justify-center">
      <ChevronRight className="w-[16px] h-[16px] text-[#666]" />
    </div>
  </div>
);

// ---------- page ----------

const BottomBar = () => (
  <div className="flex h-[39px] shrink-0 border-t border-[#e2e2e2] bg-[#f1f2f4] font-['Liberation_Sans',sans-serif]">
    <div className="flex w-[29px] flex-col items-center justify-center gap-[3px] border-r border-[#e2e2e2]">
      <div className="h-[3px] w-[3px] bg-[#777]" />
      <div className="h-[3px] w-[3px] bg-[#777]" />
      <div className="h-[3px] w-[3px] bg-[#777]" />
    </div>
    <div className="flex w-[138px] items-center justify-center bg-white text-[13px] font-bold text-[#0a9c5a]">Page-1</div>
    <div className="flex w-[30px] items-center justify-center border-r border-[#e2e2e2] pb-[4px]">
      <svg viewBox="0 0 14 14" className="w-[13px] h-[13px]"><path d="M7 0v14M0 7h14" stroke="#8a8a8a" strokeWidth="2.4" /></svg>
    </div>
  </div>
);

const App = () => (
  <div className="flex h-[1053px] w-[1848px] flex-col overflow-hidden bg-white font-['Noto_Sans','DejaVu_Sans',sans-serif]">
    <TabStrip />
    <AddressBar />
    <Bookmarks />
    <AppHeader />
    <Toolbar />
    <div className="flex min-h-0 flex-1">
      <Sidebar />
      <div className="relative w-[13px] shrink-0 border-r border-[#e2e2e2] bg-[#fcfcfc]">
        <div className="absolute left-[5px] top-[423px] flex gap-[1px]">
          <div className="h-[7px] w-px bg-[#666]" />
          <div className="h-[7px] w-px bg-[#666]" />
        </div>
      </div>
      <div className="flex min-w-0 flex-1 flex-col">
        <div className="flex min-h-0 flex-1 flex-col">
          <div className="flex h-[14px] shrink-0 border-b border-[#dcdcdc] bg-[#e7e7eb]">
            <div className="w-[14px] shrink-0 border-r border-[#dcdcdc] bg-white" />
            <div className="ml-[353px]"><TopRuler /></div>
          </div>
          <div className="flex min-h-0 flex-1">
            <div className="w-[14px] shrink-0 border-r border-[#dcdcdc] bg-[#e7e7eb]"><SideRuler /></div>
            <div className="relative min-w-0 flex-1 overflow-hidden bg-[#f8f9fb] pl-[350px] pt-[39px]">
              <div className="w-[938px] bg-white shadow-[0_0_3px_rgba(0,0,0,0.3)]"><Diagram /></div>
              <div className="absolute bottom-[1px] left-[453px] h-[8px] w-[590px] rounded-full bg-[#dfe0e2]" />
              <div className="absolute right-[3px] top-[255px] h-[266px] w-[7px] rounded-full bg-[#dfe0e2]" />
            </div>
          </div>
        </div>
        <BottomBar />
      </div>
      <RightRail />
    </div>
  </div>
);

export default App;
